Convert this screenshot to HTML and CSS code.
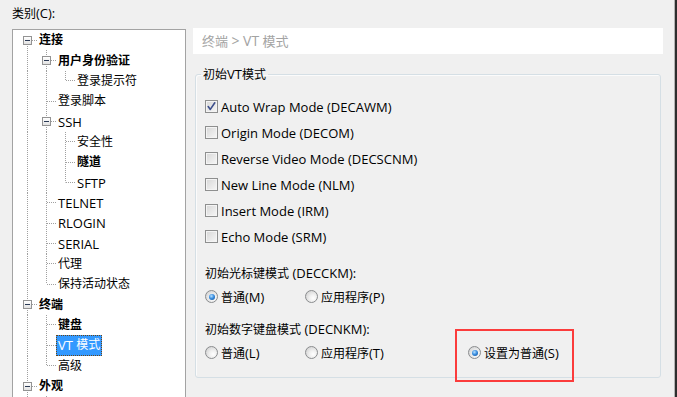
FILE: index.html
```
<!DOCTYPE html>
<html lang="zh-CN">
<head>
<meta charset="utf-8">
<title>VT 模式</title>
<link rel="stylesheet" href="styles.css">
</head>
<body>
<div class="window">
  <div class="cat-label">类别<span class="en">(C):</span></div>
  <div class="main">
    <div class="tree">
      <div class="row"><span class="c f"><span class="exp"></span></span><span class="lbl b">连接</span></div>
      <div class="row"><span class="c v"></span><span class="c t"><span class="exp"></span></span><span class="lbl b">用户身份验证</span></div>
      <div class="row"><span class="c v"></span><span class="c v"></span><span class="c l"></span><span class="lbl">登录提示符</span></div>
      <div class="row"><span class="c v"></span><span class="c t"></span><span class="lbl">登录脚本</span></div>
      <div class="row"><span class="c v"></span><span class="c t"><span class="exp"></span></span><span class="lbl en">SSH</span></div>
      <div class="row"><span class="c v"></span><span class="c v"></span><span class="c t"></span><span class="lbl">安全性</span></div>
      <div class="row"><span class="c v"></span><span class="c v"></span><span class="c t"></span><span class="lbl b">隧道</span></div>
      <div class="row"><span class="c v"></span><span class="c v"></span><span class="c l"></span><span class="lbl en">SFTP</span></div>
      <div class="row"><span class="c v"></span><span class="c t"></span><span class="lbl en">TELNET</span></div>
      <div class="row"><span class="c v"></span><span class="c t"></span><span class="lbl en">RLOGIN</span></div>
      <div class="row"><span class="c v"></span><span class="c t"></span><span class="lbl en">SERIAL</span></div>
      <div class="row"><span class="c v"></span><span class="c t"></span><span class="lbl">代理</span></div>
      <div class="row"><span class="c v"></span><span class="c l"></span><span class="lbl">保持活动状态</span></div>
      <div class="row"><span class="c t"><span class="exp"></span></span><span class="lbl b">终端</span></div>
      <div class="row"><span class="c v"></span><span class="c t"></span><span class="lbl b">键盘</span></div>
      <div class="row"><span class="c v"></span><span class="c t"></span><span class="lbl sel"><span class="en">VT&nbsp;</span>模式</span></div>
      <div class="row"><span class="c v"></span><span class="c l"></span><span class="lbl">高级</span></div>
      <div class="row"><span class="c t"><span class="exp"></span></span><span class="lbl b">外观</span></div>
      <div class="row"><span class="c v"></span><span class="c t"></span></div>
    </div>
    <div class="panel">
      <div class="crumb">终端 <span class="en">&gt; VT</span> 模式</div>
      <fieldset class="group">
        <legend>初始<span class="en">VT</span>模式</legend>
        <div class="checks">
          <div class="chk-row"><span class="cb"><svg width="11" height="11" viewBox="0 0 11 11"><path d="M2.2 5.6 L4.3 8.4 L8.8 1.8" fill="none" stroke="#3d4f8c" stroke-width="1.6" stroke-linecap="round" stroke-linejoin="round"/></svg></span><span class="en">Auto Wrap Mode (DECAWM)</span></div>
          <div class="chk-row"><span class="cb"></span><span class="en">Origin Mode (DECOM)</span></div>
          <div class="chk-row"><span class="cb"></span><span class="en">Reverse Video Mode (DECSCNM)</span></div>
          <div class="chk-row"><span class="cb"></span><span class="en">New Line Mode (NLM)</span></div>
          <div class="chk-row"><span class="cb"></span><span class="en">Insert Mode (IRM)</span></div>
          <div class="chk-row"><span class="cb"></span><span class="en">Echo Mode (SRM)</span></div>
        </div>
        <div class="sect-label">初始光标键模式<span class="en"> (DECCKM):</span></div>
        <div class="radio-row">
          <div class="opt w1"><span class="rb on"></span><span>普通<span class="en">(M)</span></span></div>
          <div class="opt w2"><span class="rb"></span><span>应用程序<span class="en">(P)</span></span></div>
        </div>
        <div class="sect-label second">初始数字键盘模式<span class="en"> (DECNKM):</span></div>
        <div class="radio-row">
          <div class="opt w1"><span class="rb"></span><span>普通<span class="en">(L)</span></span></div>
          <div class="opt w2"><span class="rb"></span><span>应用程序<span class="en">(T)</span></span></div>
          <div class="opt"><span class="rb on"></span><span>设置为普通<span class="en">(S)</span></span></div>
        </div>
      </fieldset>
    </div>
  </div>
  <div class="mark"></div>
</div>
</body>
</html>
```
FILE: styles.css
```
* { box-sizing: border-box; }
html, body { margin: 0; padding: 0; }
body {
  background: #f0f0f0;
  font-family: "Open Sans", "Noto Sans CJK SC", sans-serif;
  font-size: 12px;
  color: #000;
}
.en { font-size: 13px; }
.window {
  position: relative;
  width: 677px;
  height: 397px;
  overflow: hidden;
  padding-left: 12px;
  box-shadow: inset -2px 0 0 #2e2e2e, inset -3px 0 0 #b4b4b4;
}
.cat-label {
  height: 28px;
  padding-top: 6px;
  line-height: 15px;
}
.main {
  display: flex;
  align-items: flex-start;
  gap: 7px;
}
.tree {
  --vd: repeating-linear-gradient(to bottom, #a0a0a0 0 1px, transparent 1px 2px);
  --hd: repeating-linear-gradient(to right, #a0a0a0 0 1px, transparent 1px 2px);
  margin-top: 1px;
  width: 174px;
  height: 400px;
  flex: none;
  background: #fff;
  border: 1px solid #a3a3a3;
  border-bottom: none;
  padding-left: 5px;
}
.row {
  display: flex;
  align-items: center;
  height: 20.35px;
  white-space: nowrap;
}
.c {
  flex: none;
  width: 19px;
  align-self: stretch;
  display: flex;
  align-items: center;
  justify-content: center;
  background-repeat: no-repeat;
}
.c.v {
  background-image: var(--vd);
  background-size: 1px 100%;
  background-position: 9px 0;
}
.c.t {
  background-image: var(--vd), var(--hd);
  background-size: 1px 100%, 9px 1px;
  background-position: 9px 0, 10px 50%;
}
.c.l {
  background-image: var(--vd), var(--hd);
  background-size: 1px 50%, 9px 1px;
  background-position: 9px 0, 10px 50%;
}
.c.f {
  background-image: var(--vd), var(--hd);
  background-size: 1px 50%, 9px 1px;
  background-position: 9px 100%, 10px 50%;
}
.exp {
  width: 9px;
  height: 9px;
  border: 1px solid #939393;
  background: linear-gradient(#ffffff, #e2e2e2);
  display: flex;
  align-items: center;
  justify-content: center;
  margin-left: -1px;
}
.exp::after {
  content: "";
  width: 5px;
  height: 1px;
  background: #2b3a55;
}
.lbl {
  line-height: 18px;
  padding: 0 2px;
}
.lbl.b { font-weight: 700; }
.lbl.sel {
  align-self: stretch;
  display: flex;
  align-items: center;
  padding: 0 1px;
  background: #3399ff;
  color: #fff;
  border: 1px dotted #6a4416;
}
.panel {
  width: 470px;
  flex: none;
}
.crumb {
  height: 26px;
  background: #fff;
  line-height: 26px;
  padding-left: 9px;
  font-size: 13px;
  color: #a3a3a3;
}
.crumb .en { font-size: 14px; }
.group {
  margin: 12px 2px 0;
  padding: 0 0 14px 9px;
  border: 1px solid #d5dfe5;
  border-radius: 3px;
  box-shadow: inset 1px 1px 0 #fbfbfb;
  min-width: 0;
}
.group legend {
  margin-left: -4px;
  padding: 0 2px;
  height: 16px;
  line-height: 16px;
}
.checks { margin-top: 11.5px; }
.chk-row {
  height: 26px;
  display: flex;
  align-items: center;
  gap: 3px;
}
.cb {
  flex: none;
  width: 13px;
  height: 13px;
  border: 1px solid #8e8f8f;
  background: linear-gradient(135deg, #d6d6d6, #f7f7f7);
  box-shadow: inset 0 0 0 1px #f4f4f4;
  display: flex;
  align-items: center;
  justify-content: center;
}
.sect-label {
  margin-top: 15.5px;
  height: 16px;
  line-height: 16px;
}
.sect-label.second { margin-top: 14.5px; }
.radio-row {
  margin-top: 5.5px;
  height: 20px;
  display: flex;
  align-items: center;
}
.opt {
  display: flex;
  align-items: center;
  gap: 3px;
}
.opt.w1 { width: 100px; }
.opt.w2 { width: 163px; }
.rb {
  flex: none;
  width: 13px;
  height: 13px;
  border-radius: 50%;
  border: 1px solid #8a8c8e;
  background: radial-gradient(circle at 65% 65%, #ffffff 0, #f0f0f0 35%, #c9c9c9 100%);
  display: flex;
  align-items: center;
  justify-content: center;
}
.rb.on::after {
  content: "";
  width: 6px;
  height: 6px;
  border-radius: 50%;
  background: radial-gradient(circle at 40% 35%, #b9e2ff 0, #3a8ee0 45%, #0d4a8e 100%);
}
.mark {
  position: absolute;
  left: 455px;
  top: 329px;
  width: 119px;
  height: 53px;
  border: 2.5px solid #fb3c3c;
}
```
